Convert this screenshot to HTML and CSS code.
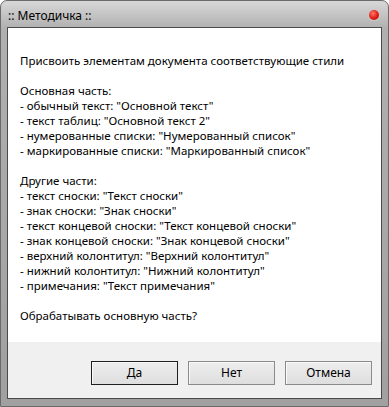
FILE: index.html
```html
<!DOCTYPE html>
<html lang="ru">
<head>
    <meta charset="UTF-8">
    <title>Методичка</title>
    <link rel="stylesheet" href="styles.css">
</head>
<body>
<div class="window">
    <div class="titlebar">
        <span class="title">:: Методичка ::</span>
        <span class="close"></span>
    </div>
    <div class="client">
        <div class="message">Присвоить элементам документа соответствующие стили

Основная часть:
- обычный текст: "Основной текст"
- текст таблиц: "Основной текст 2"
- нумерованные списки: "Нумерованный список"
- маркированные списки: "Маркированный список"

Другие части:
- текст сноски: "Текст сноски"
- знак сноски: "Знак сноски"
- текст концевой сноски: "Текст концевой сноски"
- знак концевой сноски: "Знак концевой сноски"
- верхний колонтитул: "Верхний колонтитул"
- нижний колонтитул: "Нижний колонтитул"
- примечания: "Текст примечания"

Обрабатывать основную часть?</div>
        <div class="footer">
            <button class="btn default">Да</button>
            <button class="btn">Нет</button>
            <button class="btn">Отмена</button>
        </div>
    </div>
</div>
</body>
</html>
```

FILE: styles.css
```css
body {
    margin: 0;
    font-family: "Noto Sans", "Open Sans", sans-serif;
    font-size: 11.5px;
    background: #fff;
}

.window {
    box-sizing: border-box;
    width: 389px;
    height: 407px;
    display: flex;
    flex-direction: column;
    border: 1px solid #6a6a6a;
    border-radius: 7px 7px 0 0;
    background: linear-gradient(#d8d8d8, #b0b0b0 27px, #a0a0a0);
    padding: 0 6px 7px;
}

.titlebar {
    height: 26px;
    display: flex;
    align-items: center;
    justify-content: space-between;
    padding: 0 3px 0 1px;
}

.title {
    color: #000;
    font-size: 12px;
    margin-top: 2px;
}

.close {
    width: 10px;
    height: 10px;
    border-radius: 50%;
    background: radial-gradient(circle at 40% 35%, #ff7a6e, #e01b10 55%, #a8100a);
    box-shadow: 0 0 0 1px #c9c9c9;
    margin-top: 2px;
}

.client {
    flex: 1;
    display: flex;
    flex-direction: column;
    border: 1px solid #4a4a4a;
    background: #fff;
}

.message {
    flex: 1;
    white-space: pre-line;
    line-height: 15px;
    padding: 25px 12px 0;
    color: #000;
}

.footer {
    box-sizing: border-box;
    height: 56px;
    background: #f0f0f0;
    display: flex;
    align-items: center;
    justify-content: flex-end;
    gap: 10px;
    padding: 5px 9px 0 0;
}

.btn {
    width: 87px;
    height: 24px;
    font-family: inherit;
    font-size: 12px;
    color: #000;
    background: linear-gradient(#ededed, #e6e6e6 50%, #dedede);
    border: 1px solid #8a8a8a;
    border-radius: 0;
    box-shadow: inset 1px 1px 0 #fafafa;
    padding: 0;
}

.btn.default {
    border-color: #1f1f1f;
}
```
